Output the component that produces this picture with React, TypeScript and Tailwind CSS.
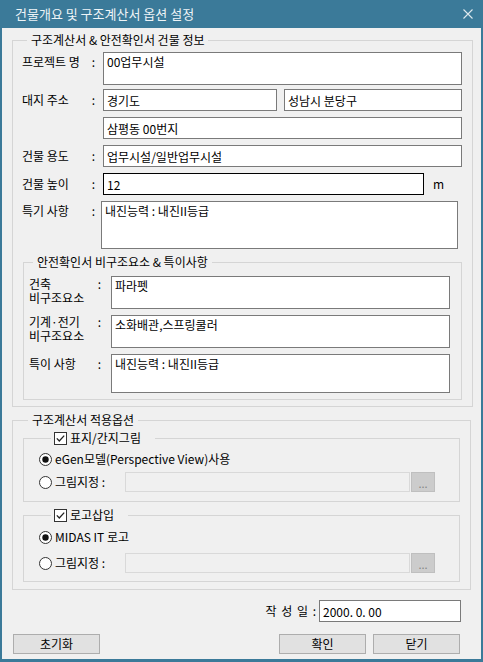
import React from "react";

function Check() {
  return (
    <svg width="13" height="13" viewBox="0 0 13 13" className="shrink-0">
      <rect x="0.5" y="0.5" width="12" height="12" fill="#fff" stroke="#333" />
      <path d="M2.8 6.4 L5.3 9 L10.2 3.6" fill="none" stroke="#222" strokeWidth="1.3" />
    </svg>
  );
}

function Radio({ on = false }: { on?: boolean }) {
  return (
    <svg width="13" height="13" viewBox="0 0 13 13" className="shrink-0">
      <circle cx="6.5" cy="6.5" r="6" fill="#fff" stroke="#333" />
      {on && <circle cx="6.5" cy="6.5" r="3.2" fill="#111" />}
    </svg>
  );
}

function Label({ children, w, pr, pt }: { children: React.ReactNode; w: string; pr: string; pt: string }) {
  return (
    <div className={`${w} ${pr} ${pt} shrink-0 flex justify-between`}>
      <span>{children}</span>
      <span>:</span>
    </div>
  );
}

const box = "border border-[#7a7a7a] bg-white px-[3px] outline-none text-black";

export default function App() {
  return (
    <div className="w-[483px] h-[662px] bg-[#3b7a99] flex flex-col px-[2px] pb-[3px] font-['Noto_Sans_CJK_KR','Noto_Sans',sans-serif] text-[12px] leading-[16px] text-black">
      {/* Title bar */}
      <div className="h-[28px] shrink-0 flex items-center justify-between pl-[13px] pr-[8px] text-[13px] text-[#eef4f7]">
        <span>건물개요 및 구조계산서 옵션 설정</span>
        <svg width="10" height="10" viewBox="0 0 10 10">
          <path d="M0.5 0.5 L9.5 9.5 M9.5 0.5 L0.5 9.5" stroke="#dfe9ee" strokeWidth="1.1" />
        </svg>
      </div>

      <div className="flex-1 bg-[#f0f0f0] px-[10px] pt-[4px]">
        {/* Group 1 */}
        <fieldset className="border border-[#d5d5d5] pl-[9px] pr-[10px] pt-[4px] pb-[6px]">
          <legend className="ml-[5px] px-[4px]">구조계산서 &amp; 안전확인서 건물 정보</legend>

          <div className="flex">
            <Label w="w-[81px]" pr="pr-[8px]" pt="pt-[2px]">프로젝트 명</Label>
            <textarea defaultValue="00업무시설" className={`${box} flex-1 h-[33px] pt-[1px] resize-none overflow-hidden`} />
          </div>

          <div className="flex mt-[4px]">
            <Label w="w-[81px]" pr="pr-[8px]" pt="pt-[3px]">대지 주소</Label>
            <input defaultValue="경기도" className={`${box} w-[174px] h-[22px]`} />
            <input defaultValue="성남시 분당구" className={`${box} flex-1 min-w-0 ml-[7px] h-[22px]`} />
          </div>

          <div className="flex mt-[6px] pl-[81px]">
            <input defaultValue="삼평동 00번지" className={`${box} flex-1 h-[22px]`} />
          </div>

          <div className="flex mt-[6px]">
            <Label w="w-[81px]" pr="pr-[8px]" pt="pt-[3px]">건물 용도</Label>
            <input defaultValue="업무시설/일반업무시설" className={`${box} flex-1 h-[22px]`} />
          </div>

          <div className="flex mt-[6px] items-center">
            <Label w="w-[81px]" pr="pr-[8px]" pt="pt-0">건물 높이</Label>
            <input defaultValue="12" className="border border-black bg-white px-[3px] outline-none w-[321px] h-[22px]" />
            <span className="ml-[9px]">m</span>
          </div>

          <div className="flex mt-[6px]">
            <Label w="w-[81px]" pr="pr-[8px]" pt="pt-[2px]">특기 사항</Label>
            <textarea defaultValue="내진능력 : 내진II등급" className={`${box} -ml-[2px] w-[357px] h-[48px] pt-[1px] resize-none overflow-hidden`} />
          </div>

          {/* Group 2 */}
          <fieldset className="mt-[5px] ml-[1px] w-[439px] border border-[#d5d5d5] pl-[5px] pr-[11px] pt-[6px] pb-[6px]">
            <legend className="ml-[4px] px-[4px]">안전확인서 비구조요소 &amp; 특이사항</legend>

            <div className="flex">
              <div className="w-[82px] shrink-0 flex justify-between pr-[10px] pt-[1px] leading-[14px]">
                <span className="flex flex-col">
                  <span>건축</span>
                  <span>비구조요소</span>
                </span>
                <span>:</span>
              </div>
              <textarea defaultValue="파라펫" className={`${box} flex-1 h-[33px] pt-[1px] resize-none overflow-hidden`} />
            </div>

            <div className="flex mt-[6px]">
              <div className="w-[82px] shrink-0 flex justify-between pr-[10px] pt-0 leading-[14px]">
                <span className="flex flex-col">
                  <span>기계·전기</span>
                  <span>비구조요소</span>
                </span>
                <span>:</span>
              </div>
              <textarea defaultValue="소화배관,스프링쿨러" className={`${box} flex-1 h-[33px] pt-[1px] resize-none overflow-hidden`} />
            </div>

            <div className="flex mt-[6px]">
              <Label w="w-[82px]" pr="pr-[10px]" pt="pt-[2px]">특이 사항</Label>
              <textarea defaultValue="내진능력 : 내진II등급" className={`${box} flex-1 h-[39px] pt-[1px] resize-none overflow-hidden`} />
            </div>
          </fieldset>
        </fieldset>

        {/* Group 3 */}
        <fieldset className="mt-[5px] border border-[#d5d5d5] px-[10px] pt-[2px] pb-[7px]">
          <legend className="ml-[5px] px-[4px]">구조계산서 적용옵션</legend>

          <fieldset className="border border-[#d5d5d5] pl-[15px] pt-[5px] pb-[9px]">
            <legend className="ml-[12px] pl-[3px] pr-[14px]">
              <span className="flex items-center gap-[3px]">
                <Check />
                <span>표지/간지그림</span>
              </span>
            </legend>
            <div className="flex items-center gap-[3px] h-[16px]">
              <Radio on />
              <span>eGen모델(Perspective View)사용</span>
            </div>
            <div className="flex items-center mt-[5px]">
              <Radio />
              <span className="ml-[3px] w-[70px]">그림지정 :</span>
              <div className="w-[285px] h-[20px] border border-[#d9d9d9] bg-[#f0f0f0]" />
              <div className="ml-[1px] w-[24px] h-[20px] bg-[#cccccc] border border-[#bfbfbf] text-[#838383] text-center leading-[20px] text-[11px]">...</div>
            </div>
          </fieldset>

          <fieldset className="mt-[5px] border border-[#d5d5d5] pl-[15px] pt-[6px] pb-[8px]">
            <legend className="ml-[12px] pl-[3px] pr-[14px]">
              <span className="flex items-center gap-[3px]">
                <Check />
                <span>로고삽입</span>
              </span>
            </legend>
            <div className="flex items-center gap-[3px] h-[16px]">
              <Radio on />
              <span>MIDAS IT 로고</span>
            </div>
            <div className="flex items-center mt-[8px]">
              <Radio />
              <span className="ml-[3px] w-[70px]">그림지정 :</span>
              <div className="w-[285px] h-[20px] border border-[#d9d9d9] bg-[#f0f0f0]" />
              <div className="ml-[1px] w-[24px] h-[20px] bg-[#cccccc] border border-[#bfbfbf] text-[#838383] text-center leading-[20px] text-[11px]">...</div>
            </div>
          </fieldset>
        </fieldset>

        {/* Date */}
        <div className="mt-[10px] flex justify-end items-center pr-[10px]">
          <span className="tracking-[1px]">작 성 일 :</span>
          <input defaultValue="2000. 0. 00" className={`${box} ml-[2px] w-[142px] h-[22px]`} />
        </div>

        {/* Buttons */}
        <div className="mt-[12px] flex pr-[11px]">
          <button className="ml-[1px] w-[87px] h-[20px] bg-[#e1e1e1] border border-[#adadad] leading-[18px]">초기화</button>
          <div className="flex-1" />
          <button className="w-[87px] h-[20px] bg-[#e1e1e1] border border-[#adadad] leading-[18px]">확인</button>
          <button className="ml-[7px] w-[87px] h-[20px] bg-[#e1e1e1] border border-[#adadad] leading-[18px]">닫기</button>
        </div>
      </div>
    </div>
  );
}
